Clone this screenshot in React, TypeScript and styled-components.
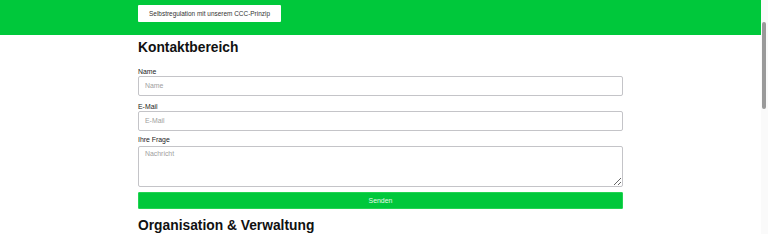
import React from 'react';
import styled, { createGlobalStyle } from 'styled-components';

const GlobalStyle = createGlobalStyle`
  html, body {
    margin: 0;
    padding: 0;
    background: #ffffff;
    font-family: "Liberation Sans", Arial, sans-serif;
    color: #222222;
  }
`;

const Page = styled.div`
  padding-right: 7px;
`;

// the browser hides its own scrollbar in the shot, so draw one over the edge
const ScrollTrack = styled.div`
  position: fixed;
  top: 0;
  right: 0;
  width: 7px;
  height: 100vh;
  background: #fafafa;
`;

const ScrollThumb = styled.div`
  position: absolute;
  top: 22px;
  left: 1px;
  width: 4px;
  height: 87px;
  border-radius: 2px;
  background: #9a9a9a;
`;

const Header = styled.header`
  background-color: #00c83b;
  padding: 5px 0 13px;
`;

const Container = styled.div`
  width: 485px;
  margin: 0 auto;
`;

const HeaderButton = styled.button`
  display: block;
  width: 143px;
  height: 17px;
  padding: 0;
  border: none;
  border-radius: 1px;
  background: #ffffff;
  color: #333333;
  font-family: "Liberation Sans", Arial, sans-serif;
  font-size: 6.45px;
  cursor: pointer;
`;

const Heading = styled.h2<{ $top?: number }>`
  margin: ${({ $top }) => $top ?? 5}px 0 0;
  font-size: 13.8px;
  font-weight: 700;
  line-height: 15.4px;
  color: #111111;
`;

const Form = styled.form`
  margin-top: 12.5px;
`;

const Field = styled.div<{ $gap?: number }>`
  margin-bottom: ${({ $gap }) => $gap ?? 7}px;
`;

const Label = styled.label`
  display: block;
  font-size: 6.9px;
  line-height: 8px;
  color: #222222;
`;

const Input = styled.input`
  display: block;
  box-sizing: border-box;
  width: 100%;
  height: 20px;
  margin: 0;
  padding: 0 6px;
  border: 1px solid #c4c4c8;
  border-radius: 2px;
  background: #ffffff;
  font-family: "Liberation Sans", Arial, sans-serif;
  font-size: 6.9px;
  color: #333333;
  outline: none;

  &::placeholder {
    color: #a0a0a0;
  }
`;

const TextArea = styled.textarea`
  display: block;
  box-sizing: border-box;
  width: 100%;
  height: 41px;
  margin: 2px 0 0;
  padding: 3px 6px;
  border: 1px solid #c4c4c8;
  border-radius: 2px;
  background: #ffffff;
  font-family: "Liberation Sans", Arial, sans-serif;
  font-size: 6.9px;
  color: #333333;
  outline: none;

  &::placeholder {
    color: #a0a0a0;
  }
`;

const SubmitButton = styled.button`
  display: block;
  width: 100%;
  height: 17px;
  padding: 0;
  border: 1px solid #22d452;
  border-radius: 1px;
  background: #00c83b;
  color: #e8f8ec;
  font-family: "Liberation Sans", Arial, sans-serif;
  font-size: 6.9px;
  cursor: pointer;
`;

const Section = styled.section`
  margin-top: 9px;
`;

const App = () => {
  return (
    <Page>
      <GlobalStyle />
      <Header>
        <Container>
          <HeaderButton type="button">Selbstregulation mit unserem CCC-Prinzip</HeaderButton>
        </Container>
      </Header>
      <Container>
        <Heading>Kontaktbereich</Heading>
        <Form onSubmit={(e) => e.preventDefault()}>
          <Field>
            <Label htmlFor="name">Name</Label>
            <Input id="name" type="text" placeholder="Name" />
          </Field>
          <Field $gap={5}>
            <Label htmlFor="email">E-Mail</Label>
            <Input id="email" type="email" placeholder="E-Mail" />
          </Field>
          <Field $gap={5}>
            <Label htmlFor="frage">Ihre Frage</Label>
            <TextArea id="frage" placeholder="Nachricht" />
          </Field>
          <SubmitButton type="submit">Senden</SubmitButton>
        </Form>
        <Section>
          <Heading $top={0}>Organisation &amp; Verwaltung</Heading>
        </Section>
      </Container>
      <ScrollTrack>
        <ScrollThumb />
      </ScrollTrack>
    </Page>
  );
};

export default App;
